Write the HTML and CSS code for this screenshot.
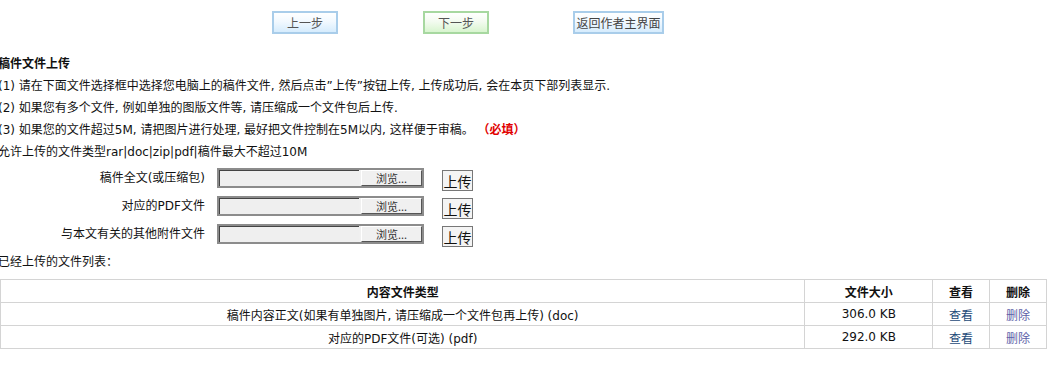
FILE: index.html
```html
<!DOCTYPE html>
<html lang="zh-CN">
<head>
    <meta charset="UTF-8">
    <title>稿件文件上传</title>
    <link rel="stylesheet" href="styles.css">
</head>
<body>
    <div class="steps">
        <a class="step-btn blue prev" href="#">上一步</a>
        <a class="step-btn green next" href="#">下一步</a>
        <a class="step-btn blue home" href="#">返回作者主界面</a>
    </div>

    <div class="notes">
        <div class="title">稿件文件上传</div>
        <div>(1) 请在下面文件选择框中选择您电脑上的稿件文件, 然后点击”上传”按钮上传, 上传成功后, 会在本页下部列表显示.</div>
        <div>(2) 如果您有多个文件, 例如单独的图版文件等, 请压缩成一个文件包后上传.</div>
        <div>(3) 如果您的文件超过5M, 请把图片进行处理, 最好把文件控制在5M以内, 这样便于审稿。 <span class="must">（必填）</span></div>
        <div>允许上传的文件类型rar|doc|zip|pdf|稿件最大不超过10M</div>
    </div>

    <div class="uploads">
        <div class="up-row">
            <div class="up-label">稿件全文(或压缩包)</div>
            <div class="file-box"><span class="file-field"></span><span class="file-browse">浏览...</span></div>
            <button class="up-btn">上传</button>
        </div>
        <div class="up-row">
            <div class="up-label">对应的PDF文件</div>
            <div class="file-box"><span class="file-field"></span><span class="file-browse">浏览...</span></div>
            <button class="up-btn">上传</button>
        </div>
        <div class="up-row">
            <div class="up-label">与本文有关的其他附件文件</div>
            <div class="file-box"><span class="file-field"></span><span class="file-browse">浏览...</span></div>
            <button class="up-btn">上传</button>
        </div>
    </div>

    <div class="list-title">已经上传的文件列表：</div>

    <table class="files">
        <tr>
            <th class="c-type">内容文件类型</th>
            <th class="c-size">文件大小</th>
            <th class="c-op">查看</th>
            <th class="c-op">删除</th>
        </tr>
        <tr>
            <td>稿件内容正文(如果有单独图片, 请压缩成一个文件包再上传) (doc)</td>
            <td>306.0 KB</td>
            <td><a class="view" href="#">查看</a></td>
            <td><a class="del" href="#">删除</a></td>
        </tr>
        <tr>
            <td>对应的PDF文件(可选) (pdf)</td>
            <td>292.0 KB</td>
            <td><a class="view" href="#">查看</a></td>
            <td><a class="del" href="#">删除</a></td>
        </tr>
    </table>
</body>
</html>
```

FILE: styles.css
```css
body {
    margin: 0;
    padding: 0;
    font-family: "DejaVu Sans", "Noto Sans CJK SC", sans-serif;
    font-size: 12px;
    color: #111;
    background: #fff;
}

.steps {
    display: flex;
    padding: 11px 0 0 272px;
    height: 23px;
}

.step-btn {
    display: flex;
    align-items: center;
    justify-content: center;
    box-sizing: border-box;
    height: 23px;
    color: #555;
    text-decoration: none;
    font-family: "Noto Sans CJK SC", sans-serif;
    font-size: 12px;
    white-space: nowrap;
}

.step-btn.blue {
    border: 2px solid #a9cdea;
    background: linear-gradient(#ffffff, #f2f9ff 45%, #d6ecfd);
}

.step-btn.green {
    border: 2px solid #a7d8a0;
    background: linear-gradient(#ffffff, #f3fbf0 45%, #d8f5cf);
}

.prev {
    width: 66px;
}

.next {
    width: 66px;
    margin-left: 85px;
}

.home {
    width: 91px;
    margin-left: 84px;
    color: #444;
}

.notes {
    margin: 19px 0 0 -2px;
    line-height: 22px;
}

.title {
    font-weight: bold;
}

.must {
    color: #e10000;
    font-weight: bold;
}

.uploads {
    margin-top: 1px;
}

.up-row {
    display: flex;
    height: 28px;
}

.up-label {
    width: 205px;
    text-align: right;
    line-height: 20px;
    margin-top: 4px;
}

.file-box {
    display: flex;
    box-sizing: border-box;
    width: 207px;
    height: 20px;
    margin: 4px 0 0 12px;
    border: 2px solid #8c8c8c;
    background: #f0f0f0;
}

.file-field {
    flex: 1;
    border-top: 1px solid #444;
    border-left: 1px solid #444;
    background: #efefef;
}

.file-browse {
    width: 61px;
    box-sizing: border-box;
    margin-left: 2px;
    border-top: 1px solid #fff;
    border-left: 1px solid #fff;
    border-right: 1px solid #555;
    border-bottom: 1px solid #555;
    background: #f0f0f0;
    color: #333;
    font-family: "Noto Sans CJK SC", sans-serif;
    font-size: 11px;
    line-height: 14px;
    text-align: center;
}

.up-btn {
    box-sizing: border-box;
    width: 31px;
    height: 21px;
    margin: 6px 0 0 18px;
    padding: 0;
    border: 1px solid #777;
    background: #f4f4f4;
    color: #111;
    font-family: "Noto Sans CJK SC", sans-serif;
    font-size: 14px;
    line-height: 18px;
}

.list-title {
    margin: 3px 0 0 -2px;
    line-height: 22px;
}

.files {
    margin-top: 6px;
    width: 1047px;
    border-collapse: collapse;
}

.files th,
.files td {
    border: 1px solid #d4d4d4;
    height: 22px;
    padding: 0;
    text-align: center;
    font-size: 12px;
}

.files th {
    font-weight: bold;
}

.c-type {
    width: 805px;
}

.c-size {
    width: 127px;
}

.c-op {
    width: 56px;
}

.view {
    color: #1d4a78;
    text-decoration: none;
}

.del {
    color: #5d5fa8;
    text-decoration: none;
}
```
